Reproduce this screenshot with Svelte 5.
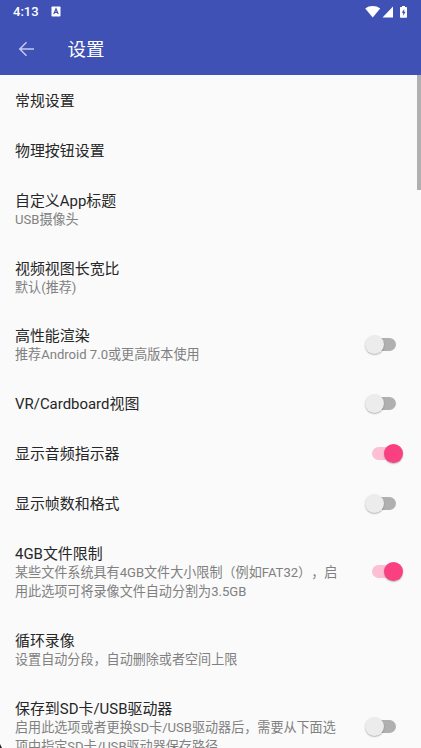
<script lang="ts">
    interface Setting {
        title: string;
        summary?: string;
        checked?: boolean;
    }

    let settings = $state<Setting[]>([
        { title: '常规设置' },
        { title: '物理按钮设置' },
        { title: '自定义App标题', summary: 'USB摄像头' },
        { title: '视频视图长宽比', summary: '默认(推荐)' },
        { title: '高性能渲染', summary: '推荐Android 7.0或更高版本使用', checked: false },
        { title: 'VR/Cardboard视图', checked: false },
        { title: '显示音频指示器', checked: true },
        { title: '显示帧数和格式', checked: false },
        {
            title: '4GB文件限制',
            summary: '某些文件系统具有4GB文件大小限制（例如FAT32），启用此选项可将录像文件自动分割为3.5GB',
            checked: true
        },
        { title: '循环录像', summary: '设置自动分段，自动删除或者空间上限' },
        {
            title: '保存到SD卡/USB驱动器',
            summary: '启用此选项或者更换SD卡/USB驱动器后，需要从下面选项中指定SD卡/USB驱动器保存路径',
            checked: false
        }
    ]);

    function toggle(item: Setting) {
        if (item.checked !== undefined) item.checked = !item.checked;
    }
</script>

<div class="screen">
    <header>
        <div class="status-bar">
            <span class="time">4:13</span>
            <svg class="app-badge" width="10" height="11" viewBox="0 0 10 11">
                <rect x="0.5" y="0.5" width="9" height="10" rx="0.8" fill="#fff" />
                <path d="M2.8 8 5 2.8 7.2 8M3.6 6.3h2.8" fill="none" stroke="#3f51b5" stroke-width="1.2" />
            </svg>
            <svg class="status-icons" width="44" height="14" viewBox="0 0 44 14">
                <path d="M.2 3.5C4.3.2 11.1.2 15.2 3.5L7.7 12.5Z" fill="#fff" />
                <path d="M28 1.5V12.5H17.5Z" fill="#fff" />
                <path d="M37 1h3v1h1.3q.7 0 .7.7v9.3q0 .7-.7.7h-5.6q-.7 0-.7-.7V2.7q0-.7.7-.7H37Z" fill="#fff" />
                <path d="M39.2 3.9 36.7 7.7h1.5v3l2.4-3.9h-1.4Z" fill="#3f51b5" />
            </svg>
        </div>
        <div class="toolbar">
            <button class="back" aria-label="返回">
                <svg width="16" height="16" viewBox="0 0 16 16">
                    <path d="M16 8H2M8.5 1.3 1.8 8 8.5 14.7" fill="none" stroke="#c5caf0" stroke-width="1.5" />
                </svg>
            </button>
            <h1>设置</h1>
        </div>
    </header>

    <main>
        {#each settings as item}
            <!-- svelte-ignore a11y_click_events_have_key_events, a11y_no_static_element_interactions -->
            <div class="row" onclick={() => toggle(item)}>
                <div class="text">
                    <div class="title">{item.title}</div>
                    {#if item.summary}
                        <div class="summary">{item.summary}</div>
                    {/if}
                </div>
                {#if item.checked !== undefined}
                    <div class="switch" class:on={item.checked}>
                        <span class="thumb"></span>
                    </div>
                {/if}
            </div>
        {/each}
        <div class="scrollbar"></div>
    </main>
    <div class="corner"></div>
</div>

<style>
    :global(body) {
        margin: 0;
        background: #fafafa;
    }

    .screen {
        position: relative;
        display: flex;
        flex-direction: column;
        height: 748px;
        overflow: hidden;
        background: #fafafa;
        font-family: Roboto, "Noto Sans CJK SC", sans-serif;
        text-spacing-trim: space-all;
    }

    header {
        flex: none;
        height: 75px;
        background: #3f51b5;
        color: #fff;
    }

    .status-bar {
        display: flex;
        align-items: center;
        height: 23px;
        padding: 0 13px;
    }

    .time {
        width: 38px;
        font-size: 13px;
        font-weight: 500;
        line-height: 23px;
    }

    .status-icons {
        margin-left: auto;
        margin-right: -1px;
    }

    .toolbar {
        display: flex;
        align-items: center;
        height: 52px;
        padding-left: 18px;
    }

    .back {
        display: flex;
        width: 49.5px;
        padding: 0;
        border: none;
        background: none;
    }

    h1 {
        margin: 2px 0 0;
        font-size: 18.5px;
        font-weight: 400;
        line-height: 28px;
    }

    main {
        position: relative;
        flex: 1;
        min-height: 0;
        padding-top: 0.87px;
        overflow: hidden;
    }

    .row {
        display: flex;
        align-items: center;
        justify-content: space-between;
        padding: 15px 25px 14.9px 15px;
    }

    .text {
        width: 329px;
    }

    .title {
        font-size: 14.95px;
        line-height: 20px;
        color: #262626;
    }

    .summary {
        margin-top: -1px;
        font-size: 13.08px;
        line-height: 19px;
        color: #808080;
        word-break: break-all;
    }

    .switch {
        position: relative;
        width: 24px;
        height: 13px;
        margin-bottom: 1.6px;
        border-radius: 7px;
        background: #b0b0b0;
    }

    .thumb {
        position: absolute;
        top: -3px;
        left: -6.7px;
        width: 19px;
        height: 19px;
        border-radius: 50%;
        background: #ececec;
        box-shadow: 0 1px 1.5px rgba(0, 0, 0, 0.28);
    }

    .switch.on {
        background: #fcbfd4;
    }

    .switch.on .thumb {
        left: 12px;
        background: #fa4080;
    }

    .scrollbar {
        position: absolute;
        top: 0;
        right: 0;
        width: 4px;
        height: 115px;
        background: #b0b0b0;
    }

    .corner {
        position: absolute;
        left: 0;
        bottom: 0;
        width: 2px;
        height: 4px;
        background: #222;
        clip-path: polygon(0 0, 100% 100%, 0 100%);
    }
</style>
